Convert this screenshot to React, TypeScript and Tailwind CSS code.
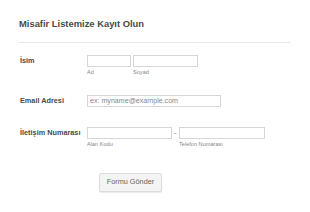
import React from "react";

const font = { fontFamily: '"Liberation Sans", Arial, sans-serif' };

export default function App() {
  return (
    <div className="w-[310px] h-[212px] bg-white overflow-hidden" style={font}>
      <div className="pt-[18px] pl-[19px] pr-[19px]">
        <div className="text-[9.4px] leading-[12px] font-bold text-[#4a4a4a]">Misafir Listemize Kayıt Olun</div>
        <div className="mt-[12px] h-px bg-[#e8e8e8]" />
      </div>
      <div className="pl-[20px]">
        {/* İsim */}
        <div className="mt-[12px] flex items-start">
          <div className="w-[67px] text-[7.3px] leading-[12px] font-bold text-[#4a4a4a]">İsim</div>
          <div className="flex gap-[2px]">
            <div className="flex flex-col">
              <div className="w-[44px] h-[12px] border border-[#d6d6d6] bg-white" />
              <div className="mt-[2px] text-[5.6px] leading-[7px] text-[#888]">Ad</div>
            </div>
            <div className="flex flex-col">
              <div className="w-[65px] h-[12px] border border-[#d6d6d6] bg-white" />
              <div className="mt-[2px] text-[5.6px] leading-[7px] text-[#888]">Soyad</div>
            </div>
          </div>
        </div>
        {/* Email */}
        <div className="mt-[19px] flex items-start">
          <div className="w-[67px] text-[7.3px] leading-[12px] font-bold text-[#4a4a4a]">Email Adresi</div>
          <div className="w-[134px] h-[12px] border border-[#d6d6d6] bg-white pl-[2px] text-[7.1px] leading-[10px] text-[#888]">
            ex: myname@example.com
          </div>
        </div>
        {/* İletişim */}
        <div className="mt-[20px] flex items-start">
          <div className="w-[67px] text-[7.3px] leading-[12px] font-bold text-[#4a4a4a] whitespace-nowrap">İletişim Numarası</div>
          <div className="flex">
            <div className="flex flex-col">
              <div className="w-[85px] h-[12px] border border-[#d6d6d6] bg-white" />
              <div className="mt-[2px] text-[5.6px] leading-[7px] text-[#888]">Alan Kodu</div>
            </div>
            <div className="w-[7px] text-center text-[7px] leading-[12px] text-[#777]">-</div>
            <div className="flex flex-col">
              <div className="w-[86px] h-[12px] border border-[#d6d6d6] bg-white" />
              <div className="mt-[2px] text-[5.6px] leading-[7px] text-[#888]">Telefon Numarası</div>
            </div>
          </div>
        </div>
      </div>
      <div className="pl-[99px] mt-[25px]">
        <div className="w-[63px] h-[19px] border border-[#dcdcdc] bg-[#f4f4f4] rounded-[2px] shadow-[0_1px_1px_rgba(0,0,0,0.08)] flex items-center justify-center text-[7.3px] text-[#666]">
          Formu Gönder
        </div>
      </div>
    </div>
  );
}
